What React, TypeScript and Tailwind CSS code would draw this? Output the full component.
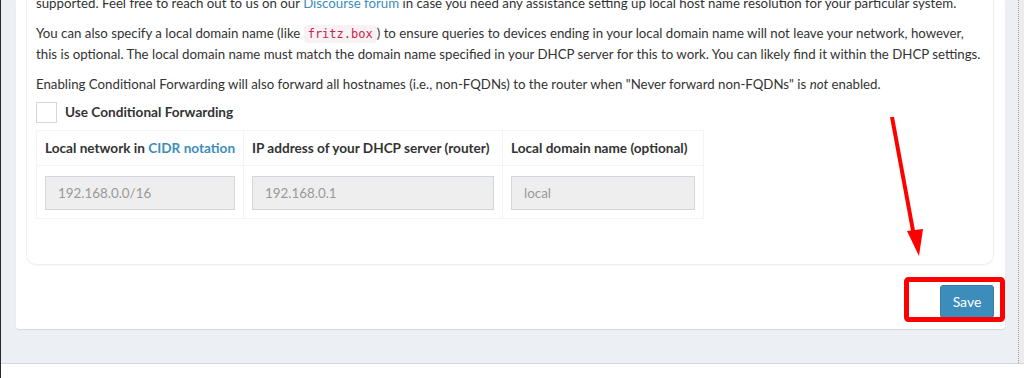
import React from "react";

const font = { fontFamily: "Lato, 'Noto Sans', sans-serif" };

const Field = ({ value }: { value: string }) => (
  <div className="h-[34px] w-full border border-[#d2d6de] bg-[#eeeeee] px-[12px] flex items-center text-[13.4px] text-[#999999]">
    {value}
  </div>
);

export default function App() {
  return (
    <div
      className="relative flex h-[378px] w-[1024px] overflow-hidden bg-[#ecf0f5] text-[#333333]"
      style={font}
    >
      <div className="w-[1px] shrink-0 bg-[#222d32]" />

      <div className="flex min-w-0 flex-1 flex-col">
        <div className="flex min-w-0 flex-1">
          <div className="ml-[15px] mr-[13px] flex min-w-0 flex-1 flex-col">
            {/* outer box */}
            <div className="flex flex-col rounded-b-[3px] bg-white pl-[10px] pr-[11px] pb-[11px] shadow-[0_1px_1px_rgba(0,0,0,0.1)]">
              {/* inner card */}
              <div className="rounded-b-[10px] border-x border-b border-[#f0f0f0] pl-[9px] pr-[10px] pb-[45px] shadow-[0_1px_1px_rgba(0,0,0,0.03)]">
                <p className="-mt-[7px] mb-[10px] text-[13.25px] leading-[20px] whitespace-nowrap">
                  supported. Feel free to reach out to us on our{" "}
                  <span className="text-[#3c8dbc]">Discourse forum</span> in case you need any assistance setting up local host name resolution for your particular system.
                </p>
                <p className="mb-[10px] text-[13.25px] leading-[20px] whitespace-nowrap">
                  You can also specify a local domain name (like{" "}
                  <code className="rounded-[4px] bg-[#f9f2f4] px-[4px] py-[2px] text-[12px] text-[#c7254e]" style={{ fontFamily: "'DejaVu Sans Mono', monospace" }}>
                    fritz.box
                  </code>
                  ) to ensure queries to devices ending in your local domain name will not leave your network, however,
                  <br />
                  this is optional. The local domain name must match the domain name specified in your DHCP server for this to work. You can likely find it within the DHCP settings.
                </p>
                <p className="mb-[8px] text-[13.25px] leading-[20px] whitespace-nowrap">
                  Enabling Conditional Forwarding will also forward all hostnames (i.e., non-FQDNs) to the router when "Never forward non-FQDNs" is <em>not</em> enabled.
                </p>

                <div className="flex items-center gap-[8px]">
                  <div className="h-[21px] w-[21px] border border-[#d2d6de] bg-white" />
                  <span className="text-[13.6px] font-bold">Use Conditional Forwarding</span>
                </div>

                <table className="mt-[7px] w-[667px] table-fixed border-collapse border border-[#f4f4f4] text-[13.6px]">
                  <colgroup>
                    <col className="w-[207px]" />
                    <col className="w-[259px]" />
                    <col className="w-[201px]" />
                  </colgroup>
                  <thead>
                    <tr>
                      <th className="border border-[#f4f4f4] px-[8px] py-[7px] text-left font-bold leading-[20px] whitespace-nowrap">
                        Local network in <span className="text-[#3c8dbc]">CIDR notation</span>
                      </th>
                      <th className="border border-[#f4f4f4] px-[8px] py-[7px] text-left font-bold leading-[20px] whitespace-nowrap">
                        IP address of your DHCP server (router)
                      </th>
                      <th className="border border-[#f4f4f4] px-[8px] py-[7px] text-left font-bold leading-[20px] whitespace-nowrap">
                        Local domain name (optional)
                      </th>
                    </tr>
                  </thead>
                  <tbody>
                    <tr>
                      <td className="border border-[#f4f4f4] px-[8px] pt-[10px] pb-[8px]">
                        <Field value="192.168.0.0/16" />
                      </td>
                      <td className="border border-[#f4f4f4] px-[8px] pt-[10px] pb-[8px]">
                        <Field value="192.168.0.1" />
                      </td>
                      <td className="border border-[#f4f4f4] px-[8px] pt-[10px] pb-[8px]">
                        <Field value="local" />
                      </td>
                    </tr>
                  </tbody>
                </table>
              </div>

              <div className="mt-[20px] flex justify-end">
                <button className="h-[33px] w-[54px] rounded-[3px] border border-[#367fa9] bg-[#3c8dbc] text-[14px] text-white">
                  Save
                </button>
              </div>
            </div>
          </div>

          <div className="w-[1px] shrink-0 border-l border-dotted border-[#9a9a9a]" />
          <div className="w-[5px] shrink-0 bg-[#ececec]" />
        </div>

        <div className="h-[15px] shrink-0 border-t border-[#d2d6de] bg-white" />
      </div>

      {/* annotation overlay */}
      <svg className="pointer-events-none absolute inset-0" width="1024" height="378">
        <line x1="892" y1="117" x2="914" y2="236" stroke="#ff0000" strokeWidth="4" />
        <polygon points="907,231 923,229 919,256" fill="#ff0000" />
        <rect x="906.5" y="279.5" width="96" height="40" rx="2" fill="none" stroke="#ff0000" strokeWidth="5" />
      </svg>
    </div>
  );
}
